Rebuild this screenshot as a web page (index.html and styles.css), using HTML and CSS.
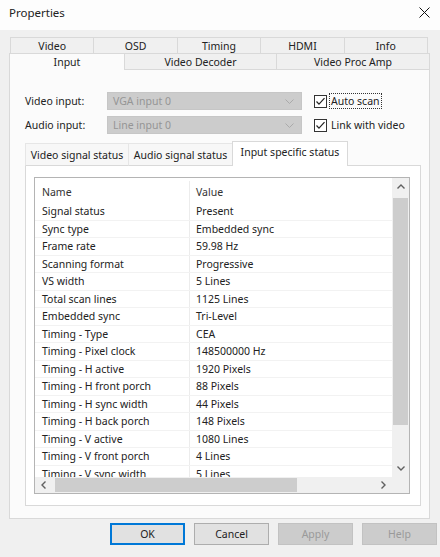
FILE: index.html
```html
<!DOCTYPE html>
<html>
<head>
<meta charset="utf-8">
<link rel="stylesheet" href="styles.css">
</head>
<body>
<div class="titlebar">
  <span class="title">Properties</span>
  <svg class="close" width="11" height="11" viewBox="0 0 11 11"><path d="M0.5 0.5 L10.5 10.5 M10.5 0.5 L0.5 10.5" stroke="#111" stroke-width="1" fill="none"/></svg>
</div>
<div class="dialog">
  <div class="tabs">
    <div class="tabrow row1">
      <div class="tab">Video</div>
      <div class="tab">OSD</div>
      <div class="tab">Timing</div>
      <div class="tab">HDMI</div>
      <div class="tab last">Info</div>
    </div>
    <div class="tabrow row2">
      <div class="tab sel t-input">Input</div>
      <div class="tab t-dec">Video Decoder</div>
      <div class="tab t-amp last">Video Proc Amp</div>
    </div>
  </div>
  <div class="panel">
    <div class="form">
      <span class="label">Video input:</span>
      <div class="combo"><span>VGA input 0</span><svg width="9" height="5" viewBox="0 0 9 5"><path d="M0.5 0.5 L4.5 4.5 L8.5 0.5" stroke="#aaa" fill="none"/></svg></div>
      <div class="check"><svg class="box" width="13" height="13" viewBox="0 0 13 13"><rect x="0.5" y="0.5" width="12" height="12" fill="#fff" stroke="#333"/><path d="M2.5 6.5 L5 9.2 L10.5 3.2" stroke="#222" stroke-width="1.2" fill="none"/></svg><span class="focus">Auto scan</span></div>
      <span class="label">Audio input:</span>
      <div class="combo"><span>Line input 0</span><svg width="9" height="5" viewBox="0 0 9 5"><path d="M0.5 0.5 L4.5 4.5 L8.5 0.5" stroke="#aaa" fill="none"/></svg></div>
      <div class="check"><svg class="box" width="13" height="13" viewBox="0 0 13 13"><rect x="0.5" y="0.5" width="12" height="12" fill="#fff" stroke="#333"/><path d="M2.5 6.5 L5 9.2 L10.5 3.2" stroke="#222" stroke-width="1.2" fill="none"/></svg><span class="nofocus">Link with video</span></div>
    </div>
    <div class="subtabs">
      <div class="stab s1">Video signal status</div>
      <div class="stab s2">Audio signal status</div>
      <div class="stab sel s3">Input specific status</div>
      <div class="sfill"></div>
    </div>
    <div class="subpanel">
      <div class="listbox">
        <div class="lvcontent">
          <div class="lvhead"><span class="c1">Name</span><span class="c2">Value</span></div>
          <div class="lvrow"><span class="c1">Signal status</span><span class="c2">Present</span></div>
          <div class="lvrow"><span class="c1">Sync type</span><span class="c2">Embedded sync</span></div>
          <div class="lvrow"><span class="c1">Frame rate</span><span class="c2">59.98 Hz</span></div>
          <div class="lvrow"><span class="c1">Scanning format</span><span class="c2">Progressive</span></div>
          <div class="lvrow"><span class="c1">VS width</span><span class="c2">5 Lines</span></div>
          <div class="lvrow"><span class="c1">Total scan lines</span><span class="c2">1125 Lines</span></div>
          <div class="lvrow"><span class="c1">Embedded sync</span><span class="c2">Tri-Level</span></div>
          <div class="lvrow"><span class="c1">Timing - Type</span><span class="c2">CEA</span></div>
          <div class="lvrow"><span class="c1">Timing - Pixel clock</span><span class="c2">148500000 Hz</span></div>
          <div class="lvrow"><span class="c1">Timing - H active</span><span class="c2">1920 Pixels</span></div>
          <div class="lvrow"><span class="c1">Timing - H front porch</span><span class="c2">88 Pixels</span></div>
          <div class="lvrow"><span class="c1">Timing - H sync width</span><span class="c2">44 Pixels</span></div>
          <div class="lvrow"><span class="c1">Timing - H back porch</span><span class="c2">148 Pixels</span></div>
          <div class="lvrow"><span class="c1">Timing - V active</span><span class="c2">1080 Lines</span></div>
          <div class="lvrow"><span class="c1">Timing - V front porch</span><span class="c2">4 Lines</span></div>
          <div class="lvrow"><span class="c1">Timing - V sync width</span><span class="c2">5 Lines</span></div>
        </div>
        <div class="vscroll">
          <div class="arrow"><svg width="8" height="5" viewBox="0 0 8 5"><path d="M0.5 4.5 L4 1 L7.5 4.5" stroke="#606060" stroke-width="1.4" fill="none"/></svg></div>
          <div class="vtrack"><div class="vthumb"></div></div>
          <div class="arrow"><svg width="8" height="5" viewBox="0 0 8 5"><path d="M0.5 0.5 L4 4 L7.5 0.5" stroke="#606060" stroke-width="1.4" fill="none"/></svg></div>
        </div>
        <div class="hscroll">
          <div class="arrow"><svg width="5" height="8" viewBox="0 0 5 8"><path d="M4.5 0.5 L1 4 L4.5 7.5" stroke="#606060" stroke-width="1.4" fill="none"/></svg></div>
          <div class="htrack"><div class="hthumb"></div></div>
          <div class="arrow"><svg width="5" height="8" viewBox="0 0 5 8"><path d="M0.5 0.5 L4 4 L0.5 7.5" stroke="#606060" stroke-width="1.4" fill="none"/></svg></div>
        </div>
        <div class="corner"></div>
      </div>
    </div>
  </div>
</div>
<div class="buttons">
  <button class="btn default">OK</button>
  <button class="btn">Cancel</button>
  <button class="btn disabled">Apply</button>
  <button class="btn disabled">Help</button>
</div>
</body>
</html>
```

FILE: styles.css
```css
* { box-sizing: border-box; }

body {
  margin: 0;
  width: 440px;
  height: 557px;
  overflow: hidden;
  background: #f0f0f0;
  font-family: "Noto Sans", "Open Sans", sans-serif;
  font-size: 10.5px;
  color: #222;
}

.titlebar {
  height: 30px;
  background: #fdfdfd;
  display: flex;
  align-items: center;
  justify-content: space-between;
  padding: 0 10px 5px 9px;
}

.title {
  font-size: 11.5px;
  color: #222;
}

.dialog {
  padding: 7px 10px 0 9px;
}

.tabrow {
  display: flex;
}

.tab {
  text-align: center;
  background: #f0f0f0;
  border-left: 1px solid #d9d9d9;
  border-top: 1px solid #d9d9d9;
  white-space: nowrap;
}

.tab.last {
  border-right: 1px solid #d9d9d9;
}

.row1 {
  height: 16px;
  padding-left: 1px;
  padding-right: 2px;
}

.row1 .tab {
  flex: 1;
  line-height: 16px;
}

.row2 {
  height: 17px;
}

.row2 .tab {
  line-height: 16px;
  border-bottom: 1px solid #d9d9d9;
}

.row2 .tab.sel {
  background: #fbfbfb;
  border-bottom: none;
}

.t-input { width: 115px; }
.t-dec { width: 152px; }
.t-amp { flex: 1; }

.panel {
  height: 449px;
  border: 1px solid #d9d9d9;
  border-top: none;
  background: #fbfbfb;
  padding: 22px 8px 12px 15px;
}

.form {
  display: grid;
  grid-template-columns: 82px 195px auto;
  grid-auto-rows: 18px;
  row-gap: 6px;
  align-items: center;
}

.label {
  white-space: nowrap;
}

.combo {
  height: 18px;
  background: #cccccc;
  border: 1px solid #c6c6c6;
  display: flex;
  align-items: center;
  justify-content: space-between;
  padding: 0 7px 0 5px;
  color: #959595;
}

.check {
  display: flex;
  align-items: center;
  gap: 2px;
  margin-left: 12px;
  white-space: nowrap;
}

.check .box {
  flex: none;
}

.focus {
  border: 1px dotted #333;
  padding: 0 1px;
  line-height: 14px;
}

.nofocus {
  padding: 0 2px;
  line-height: 14px;
}

.subtabs {
  display: flex;
  align-items: flex-end;
  height: 25px;
  margin-top: 7px;
}

.stab {
  height: 23px;
  padding-top: 4px;
  text-align: center;
  white-space: nowrap;
  background: #f7f7f7;
  border-top: 1px solid #e6e6e6;
  border-left: 1px solid #e6e6e6;
  border-bottom: 1px solid #d9d9d9;
}

.s1 { width: 103px; }
.s2 { width: 104px; }

.stab.sel {
  width: 116px;
  height: 25px;
  padding-top: 3px;
  background: #fff;
  border: 1px solid #d9d9d9;
  border-bottom: none;
}

.sfill {
  flex: 1;
  height: 1px;
  border-bottom: 1px solid #d9d9d9;
}

.subpanel {
  height: 340px;
  background: #fff;
  border: 1px solid #d9d9d9;
  border-top: none;
  padding: 11px 10px 11px 8px;
}

.listbox {
  height: 317px;
  border: 1px solid #b4b4b4;
  display: grid;
  grid-template-columns: 1fr 17px;
  grid-template-rows: 1fr 16px;
  background: #fff;
}

.lvcontent {
  overflow: hidden;
}

.lvhead, .lvrow {
  display: flex;
  white-space: nowrap;
}

.lvhead {
  height: 25px;
  align-items: center;
  padding-top: 3px;
  color: #333;
}

.lvrow {
  height: 17.5px;
  align-items: center;
  border-bottom: 1px solid #f2f2f2;
}

.c1 {
  width: 155px;
  padding-left: 7px;
  border-right: 1px solid #ececec;
  height: 100%;
  display: flex;
  align-items: center;
}

.c2 {
  padding-left: 6px;
}

.vscroll {
  background: #f0f0f0;
  display: flex;
  flex-direction: column;
}

.arrow {
  flex: none;
  width: 17px;
  height: 17px;
  display: flex;
  align-items: center;
  justify-content: center;
}

.hscroll .arrow {
  height: 16px;
}

.vtrack {
  flex: 1;
  padding: 3px 1px 0 1px;
}

.vthumb {
  height: 227px;
  background: #cdcdcd;
}

.hscroll {
  background: #f0f0f0;
  display: flex;
}

.htrack {
  flex: 1;
  padding: 1px 0 1px 3px;
}

.hthumb {
  width: 242px;
  height: 100%;
  background: #cdcdcd;
}

.corner {
  background: #f0f0f0;
}

.buttons {
  display: flex;
  gap: 9px;
  padding-left: 110px;
  margin-top: 4px;
}

.btn {
  width: 75px;
  height: 22px;
  font-family: "Noto Sans", "Open Sans", sans-serif;
  font-size: 10.5px;
  color: #222;
  background: #e1e1e1;
  border: 1px solid #adadad;
  padding: 0;
  margin: 0;
}

.btn.default {
  border: 2px solid #0078d7;
}

.btn.disabled {
  background: #cccccc;
  border-color: #c2c2c2;
  color: #9a9a9a;
}
```
